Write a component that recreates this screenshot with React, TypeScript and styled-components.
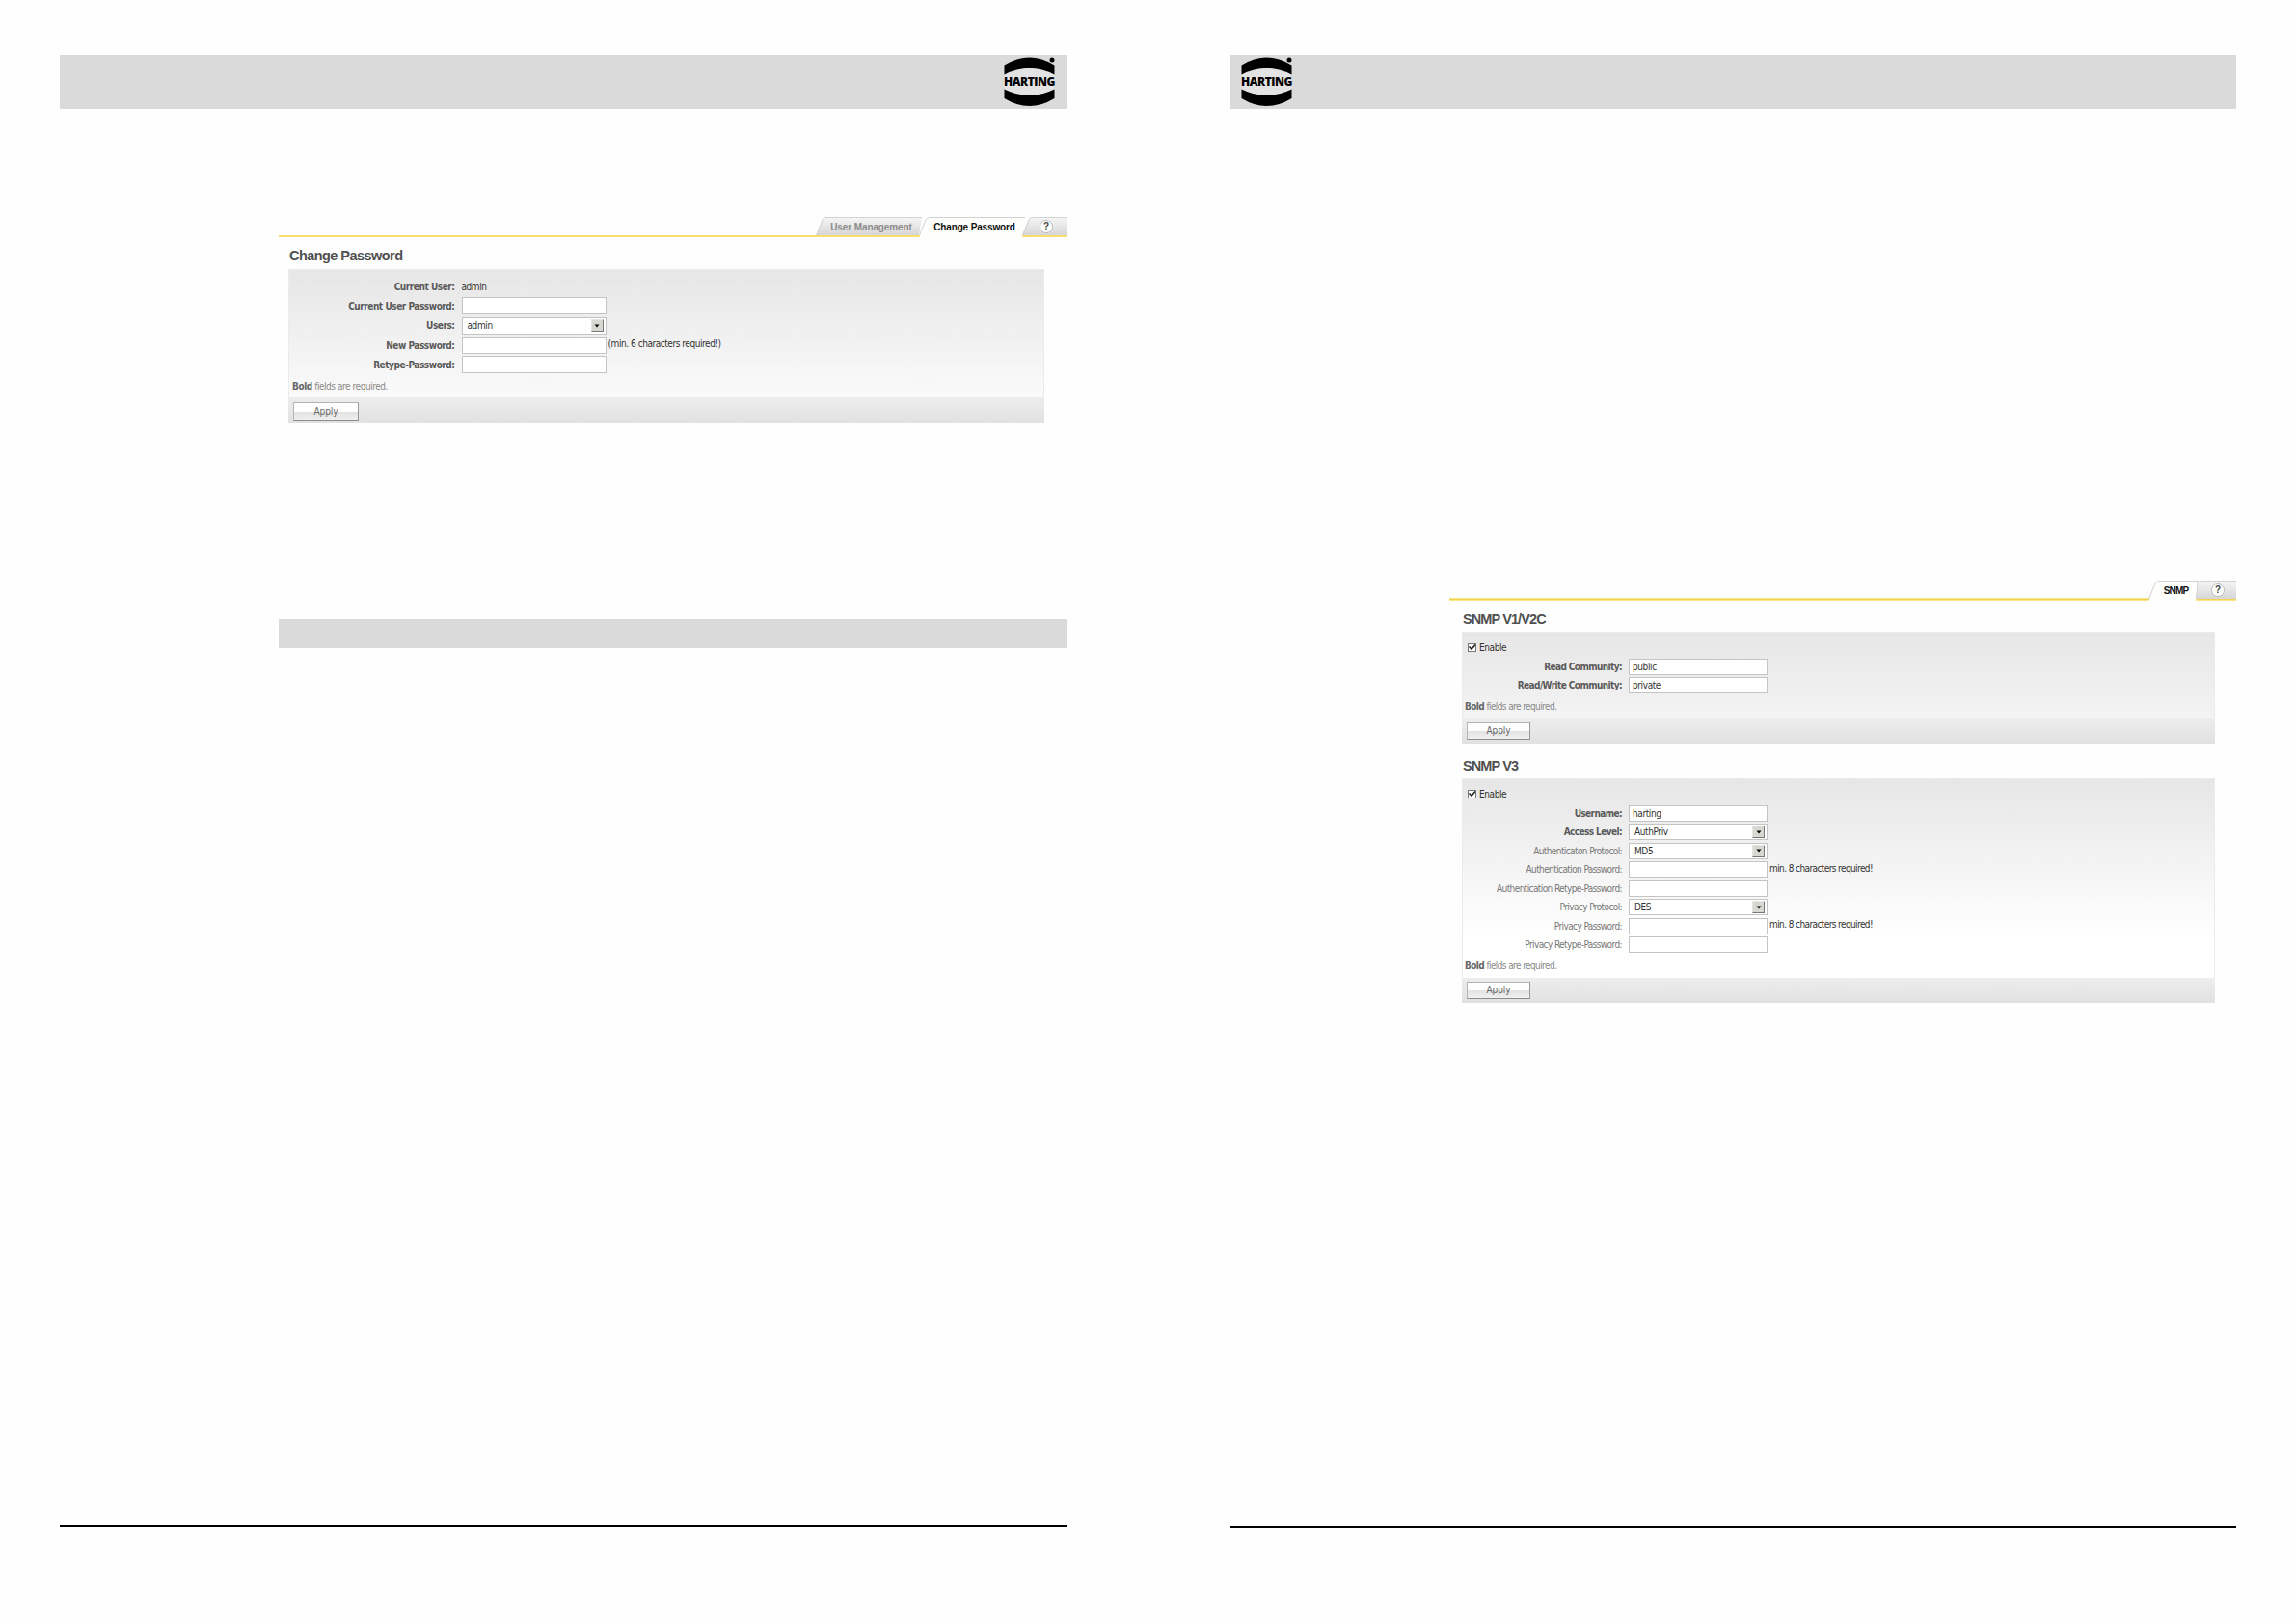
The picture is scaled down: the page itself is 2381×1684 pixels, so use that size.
import React from "react";
import styled, { createGlobalStyle } from "styled-components";

interface Field {
  label: string;
  value?: string;
  kind?: "text" | "select" | "plain";
  optional?: boolean;
  hint?: string;
}

const passwordFields: Field[] = [
  { label: "Current User:", value: "admin", kind: "plain" },
  { label: "Current User Password:" },
  { label: "Users:", value: "admin", kind: "select" },
  { label: "New Password:", hint: "(min. 6 characters required!)" },
  { label: "Retype-Password:" },
];

const snmpFields: Field[] = [
  { label: "Read Community:", value: "public" },
  { label: "Read/Write Community:", value: "private" },
];

const snmpV3Fields: Field[] = [
  { label: "Username:", value: "harting" },
  { label: "Access Level:", value: "AuthPriv", kind: "select" },
  {
    label: "Authenticaton Protocol:",
    value: "MD5",
    kind: "select",
    optional: true,
  },
  {
    label: "Authentication Password:",
    optional: true,
    hint: "min. 8 characters required!",
  },
  { label: "Authentication Retype-Password:", optional: true },
  { label: "Privacy Protocol:", value: "DES", kind: "select", optional: true },
  {
    label: "Privacy Password:",
    optional: true,
    hint: "min. 8 characters required!",
  },
  { label: "Privacy Retype-Password:", optional: true },
];

const Logo: React.FC = () => (
  <LogoBox>
    <svg width="54" height="52" viewBox="0 0 54 52">
      <path
        fill="#e3e3e3"
        d="M0.5 18.5Q26.5 5 52.5 18.5V33.5Q26.5 46.5 0.5 33.5Z"
      />
      <path d="M0.5 8.5Q26.5 -7.5 52.5 8.5V18.5Q26.5 5 0.5 18.5Z" />
      <path d="M0.5 33.5Q26.5 46.5 52.5 33.5V43Q26.5 59 0.5 43Z" />
      <circle cx="50" cy="3" r="2.5" />
    </svg>
    <LogoText>HARTING</LogoText>
  </LogoBox>
);

interface TabProps {
  width: number;
  slope?: number;
  active?: boolean;
  last?: boolean;
  children: React.ReactNode;
}

const Tab: React.FC<TabProps> = ({
  width,
  slope = 7,
  active,
  last,
  children,
}) => {
  const end = last ? width : width + 3;
  const base = active ? 23 : 20;
  const edge = `L${slope} 4Q${slope + 1} 1.5 ${slope + 4} 1.5H${end}`;
  return (
    <StyledTab $width={width}>
      <svg width={width} height="23" viewBox={`0 0 ${width} 23`}>
        <defs>
          <linearGradient id="tabShade" x1="0" y1="0" x2="0" y2="1">
            <stop offset="0" stopColor="#f6f6f6" />
            <stop offset="1" stopColor="#d6d6d6" />
          </linearGradient>
        </defs>
        <path
          d={`M0 ${base}${edge}L${width} ${base}Z`}
          fill={active ? "#fefefc" : "url(#tabShade)"}
        />
        <path d={`M0.5 20${edge}`} fill="none" stroke="#d2d2d2" />
      </svg>
      <span>{children}</span>
    </StyledTab>
  );
};

interface FormProps {
  title: string;
  fields: Field[];
  enable?: boolean;
  large?: boolean;
}

const Form: React.FC<FormProps> = ({ title, fields, enable, large }) => (
  <StyledForm $large={large}>
    <Title $large={large}>{title}</Title>
    <Panel>
      <Fields $large={large}>
        {enable && (
          <EnableRow>
            <Checkbox>
              <svg width="9" height="9" viewBox="0 0 9 9">
                <path d="M1.5 3.5L4 6L8 1.5" />
              </svg>
            </Checkbox>
            Enable
          </EnableRow>
        )}
        {fields.map((field) => (
          <FieldRow key={field.label} $large={large}>
            <Label $large={large} $optional={field.optional}>
              {field.label}
            </Label>
            {field.kind === "plain" ? (
              <PlainValue>{field.value}</PlainValue>
            ) : (
              <Input $large={large} $select={field.kind === "select"}>
                {field.value}
                {field.kind === "select" && (
                  <Arrow>
                    <svg width="6" height="4" viewBox="0 0 6 4">
                      <path d="M0.5 0.5H5.5L3 3.5Z" />
                    </svg>
                  </Arrow>
                )}
              </Input>
            )}
            {field.hint && <Hint>{field.hint}</Hint>}
          </FieldRow>
        ))}
        <Note $large={large}>
          <b>Bold</b> fields are required.
        </Note>
      </Fields>
      <Actions $large={large}>
        <ApplyButton $large={large}>Apply</ApplyButton>
      </Actions>
    </Panel>
  </StyledForm>
);

export default function App() {
  return (
    <>
      <GlobalStyle />
      <Spread>
        <Page>
          <PageHeader>
            <Logo />
          </PageHeader>
          <Screen $top={111}>
            <TabBar>
              <Tab width={107}>
                <TabText $tracking={-0.1} $muted>
                  User Management
                </TabText>
              </Tab>
              <Tab width={107} active>
                <TabText $tracking={-0.15}>Change Password</TabText>
              </Tab>
              <Tab width={46} last>
                <Help>?</Help>
              </Tab>
            </TabBar>
            <Form title="Change Password" fields={passwordFields} large />
          </Screen>
          <SectionBar />
          <PageFooter $gap={101} />
        </Page>
        <Page $right>
          <PageHeader $right>
            <Logo />
          </PageHeader>
          <Screen $top={488}>
            <TabBar $thick>
              <Tab width={49} active>
                <TabText $tracking={-0.8}>SNMP</TabText>
              </Tab>
              <Tab width={42} slope={2} last>
                <Help>?</Help>
              </Tab>
            </TabBar>
            <Form title="SNMP V1/V2C" fields={snmpFields} enable />
            <Form title="SNMP V3" fields={snmpV3Fields} enable />
          </Screen>
          <PageFooter $gap={100} />
        </Page>
      </Spread>
    </>
  );
}

const GlobalStyle = createGlobalStyle`
  * {
    box-sizing: border-box;
  }

  body {
    margin: 0;
    background-color: #fefefe;
    font-family: "DejaVu Sans Condensed", "DejaVu Sans", sans-serif;
    font-stretch: condensed;
    font-size: 10px;
    color: #444;
  }
`;

const Spread = styled.div`
  width: 2381px;
  height: 1684px;
  padding: 57px 62px 0;
  display: flex;
  gap: 170px;
`;

const Page = styled.div<{ $right?: boolean }>`
  width: ${({ $right }) => ($right ? 1043 : 1044)}px;
  height: 1627px;
  display: flex;
  flex-direction: column;
`;

const PageHeader = styled.header<{ $right?: boolean }>`
  height: 56px;
  flex-shrink: 0;
  padding: 2px 11px 0;
  background-color: #dadada;
  display: flex;
  justify-content: ${({ $right }) => ($right ? "flex-start" : "flex-end")};
`;

const LogoBox = styled.div`
  position: relative;
  width: 54px;
  height: 52px;

  svg {
    display: block;
  }
`;

const LogoText = styled.div`
  position: absolute;
  top: 19px;
  left: 0;
  font: 900 12px/13px "Open Sans", sans-serif;
  letter-spacing: -0.45px;
  color: #000;
`;

const Screen = styled.section<{ $top: number }>`
  margin-top: ${({ $top }) => $top}px;
  padding-left: 227px;
  display: flex;
  flex-direction: column;
`;

const TabBar = styled.nav<{ $thick?: boolean }>`
  height: 23px;
  display: flex;
  justify-content: flex-end;
  background: ${({ $thick }) =>
    $thick
      ? "linear-gradient(#faeea6, #f2d452, #faeea6) 0 19px / 100% 3px no-repeat"
      : "linear-gradient(#f7de70, #f7de70) 0 20px / 100% 2px no-repeat"};
`;

const StyledTab = styled.div<{ $width: number }>`
  position: relative;
  width: ${({ $width }) => $width}px;
  height: 23px;
  padding-top: 1px;
  display: flex;
  justify-content: center;

  svg {
    position: absolute;
    top: 0;
    left: 0;
    overflow: visible;
  }

  > span {
    position: relative;
    height: 20px;
    display: flex;
    align-items: center;
  }
`;

const TabText = styled.span<{ $tracking: number; $muted?: boolean }>`
  margin-left: 8px;
  font: bold 10px "Liberation Sans", sans-serif;
  letter-spacing: ${({ $tracking }) => $tracking}px;
  white-space: nowrap;
  color: ${({ $muted }) => ($muted ? "#8c8c8c" : "#111")};
`;

const Help = styled.span`
  width: 14px;
  height: 14px;
  margin-left: 4px;
  border: 1px solid #bbb;
  border-radius: 50%;
  background-color: #fff;
  font: bold 10px/12px "Liberation Sans", sans-serif;
  text-align: center;
  color: #444;
`;

const StyledForm = styled.form<{ $large?: boolean }>`
  padding: ${({ $large }) => ($large ? "0 23px 0 10px" : "0 22px 0 13px")};
  letter-spacing: ${({ $large }) => ($large ? -0.45 : -0.6)}px;

  & + & {
    margin-top: 5.5px;
  }
`;

const Title = styled.h2<{ $large?: boolean }>`
  height: ${({ $large }) => ($large ? 32 : 31)}px;
  margin: 0;
  padding-left: 1px;
  font: bold 14.5px/36px "Liberation Sans", sans-serif;
  letter-spacing: ${({ $large }) => ($large ? -0.55 : -0.9)}px;
  color: #505050;
`;

const Panel = styled.div`
  background: linear-gradient(#e6e6e6, #fff 165px);
  box-shadow: inset 0 0 0 1px #ebebeb;
`;

const Fields = styled.div<{ $large?: boolean }>`
  padding-top: ${({ $large }) => ($large ? 8 : 7)}px;
`;

const EnableRow = styled.div`
  height: 19.5px;
  padding-left: 6px;
  display: flex;
  align-items: center;
  gap: 3px;
  letter-spacing: -0.4px;
  color: #333;
`;

const Checkbox = styled.span`
  width: 9px;
  height: 9px;
  border: 1px solid #777;
  background-color: #fff;

  svg {
    display: block;
    margin: -1px;
    fill: none;
    stroke: #222;
    stroke-width: 1.6;
  }
`;

const FieldRow = styled.div<{ $large?: boolean }>`
  height: ${({ $large }) => ($large ? 20.3 : 19.5)}px;
  display: flex;
  align-items: center;
`;

const Label = styled.label<{ $large?: boolean; $optional?: boolean }>`
  width: ${({ $large }) => ($large ? 172.5 : 166)}px;
  margin-right: 7px;
  text-align: right;
  white-space: nowrap;
  font-weight: ${({ $optional }) => ($optional ? "normal" : "bold")};
  color: ${({ $optional }) => ($optional ? "#777" : "#5a5a5a")};
`;

const PlainValue = styled.span`
  color: #333;
`;

const Input = styled.div<{ $large?: boolean; $select?: boolean }>`
  width: ${({ $large }) => ($large ? 150 : 144)}px;
  height: ${({ $large }) => ($large ? 18 : 17)}px;
  padding: ${({ $select }) => ($select ? "0 2px 0 5px" : "0 3px")};
  border: 1px solid #c4c4c4;
  background-color: #fff;
  display: flex;
  align-items: center;
  justify-content: space-between;
  letter-spacing: -0.4px;
  color: #333;
`;

const Arrow = styled.span`
  width: 13px;
  height: 13px;
  border: 1px solid;
  border-color: #e6e6e0 #777 #777 #e6e6e0;
  background-color: #d8d8d2;
  display: flex;
  align-items: center;
  justify-content: center;
`;

const Hint = styled.span`
  margin: -3px 0 0 2px;
  color: #333;
`;

const Note = styled.p<{ $large?: boolean }>`
  height: ${({ $large }) => ($large ? 23.5 : 24)}px;
  margin: 0;
  padding: ${({ $large }) => ($large ? "7px 0 0 4px" : "6px 0 0 3px")};
  color: #8a8a8a;

  b {
    color: #666;
  }
`;

const Actions = styled.div<{ $large?: boolean }>`
  height: ${({ $large }) => ($large ? 27 : 26)}px;
  padding: ${({ $large }) => ($large ? "5px 0 0 5px" : "4px 0 0 5px")};
  background: linear-gradient(#ededed, #e1e1e1);
`;

const ApplyButton = styled.button<{ $large?: boolean }>`
  display: block;
  width: ${({ $large }) => ($large ? 68 : 66)}px;
  height: ${({ $large }) => ($large ? 20 : 18)}px;
  padding: 0;
  border: 1px solid;
  border-color: #b4b4b4 #999 #8c8c8c #b4b4b4;
  background: linear-gradient(#fff 50%, #e2e2e2 50%, #f0f0f0);
  font: inherit;
  letter-spacing: -0.1px;
  color: #666;
`;

const SectionBar = styled.div`
  height: 30px;
  margin: 203px 0 0 227px;
  background-color: #dadada;
`;

const PageFooter = styled.footer<{ $gap: number }>`
  height: 2px;
  margin: auto 0 ${({ $gap }) => $gap}px;
  background-color: #000;
`;
